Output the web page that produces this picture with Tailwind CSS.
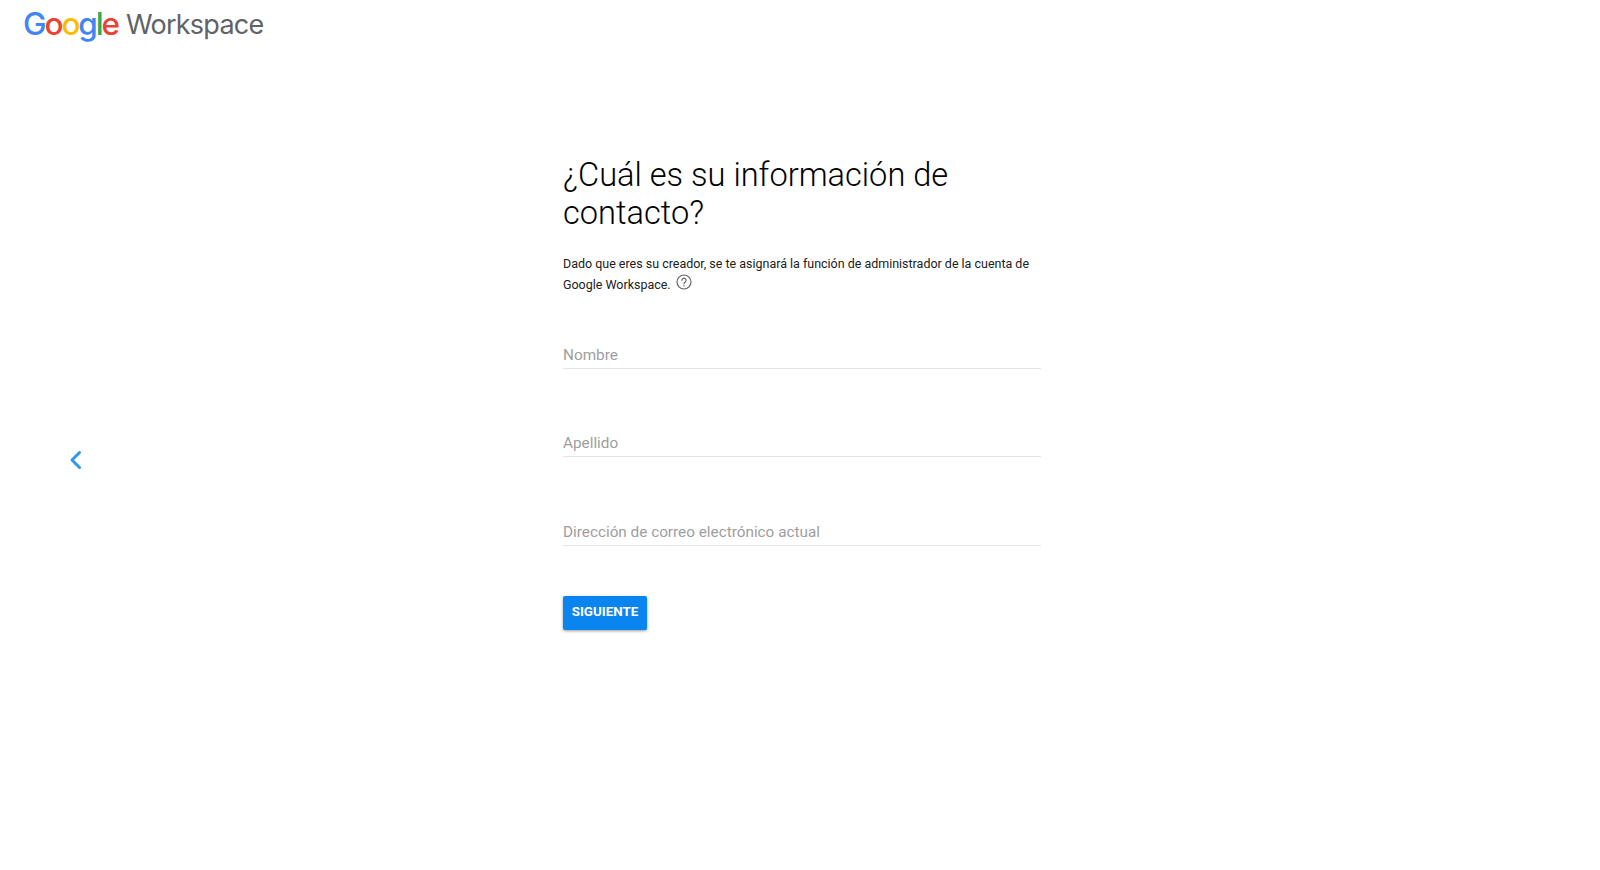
<!DOCTYPE html>
<html lang="es">
<head>
  <meta charset="UTF-8" />
  <title>Google Workspace</title>
  <script src="https://cdn.jsdelivr.net/npm/@tailwindcss/browser@4"></script>
</head>
<body class="h-[870px] overflow-hidden bg-white font-['Roboto',sans-serif]">

  <!-- LOGO -->
  <header class="h-[60px] pl-[23px] pt-[1px] flex items-start gap-[8px] leading-[46px]">
    <span class="text-[31.5px] font-medium font-['Inter',sans-serif] tracking-[-2.1px]"><span class="text-[#4285f4]">G</span><span class="text-[#ea4335]">o</span><span class="text-[#fbbc05]">o</span><span class="text-[#4285f4]">g</span><span class="text-[#34a853]">l</span><span class="text-[#ea4335]">e</span></span>
    <span class="text-[27px] text-[#5f6368] font-['Inter',sans-serif] tracking-[-0.75px] pt-[1px]">Workspace</span>
  </header>

  <div class="flex">
    <!-- BACK -->
    <div class="w-[563px] pl-[69px] pt-[390px]">
      <svg class="w-[13px] h-[20px]" viewBox="0 0 13 20" fill="none" stroke="#2f96f3" stroke-width="3" stroke-linecap="round" stroke-linejoin="round"><path d="M10.5 2.5 3 10l7.5 7.5" /></svg>
    </div>

    <!-- FORM -->
    <main class="w-[478px] pt-[96px]">
      <h1 class="text-[32.6px] leading-[38px] font-light text-black">¿Cuál es su información de contacto?</h1>

      <p class="mt-[21px] text-[12.47px] leading-[21px] text-[#212121]">
        Dado que eres su creador, se te asignará la función de administrador de la cuenta de Google Workspace.
        <svg class="inline-block w-[16px] h-[16px] ml-[2px] align-[-1px]" viewBox="0 0 16 16" fill="none" stroke="#5f6368" stroke-width="1.2"><circle cx="8" cy="8" r="7" /><path d="M5.9 6.3a2.1 2.1 0 1 1 3.3 1.7c-.8.5-1.2.9-1.2 1.8" stroke-linecap="round" /><path d="M8 11.2v1.3" /></svg>
      </p>

      <div class="mt-[49px] flex flex-col gap-[63.25px]">
        <div class="h-[25px] border-b border-[#e4e4e4] text-[15.3px] leading-[22px] text-[#9e9e9e]">Nombre</div>
        <div class="h-[25px] border-b border-[#e4e4e4] text-[15.3px] leading-[22px] text-[#9e9e9e]">Apellido</div>
        <div class="h-[25px] border-b border-[#e4e4e4] text-[15.3px] leading-[22px] text-[#9e9e9e]">Dirección de correo electrónico actual</div>
      </div>

      <button class="mt-[50px] h-[34px] w-[84px] rounded-[2px] bg-[#0a84ee] text-white text-[13.4px] font-bold shadow-[0_1px_3px_rgba(0,0,0,0.4)]">SIGUIENTE</button>
    </main>
  </div>
</body>
</html>
